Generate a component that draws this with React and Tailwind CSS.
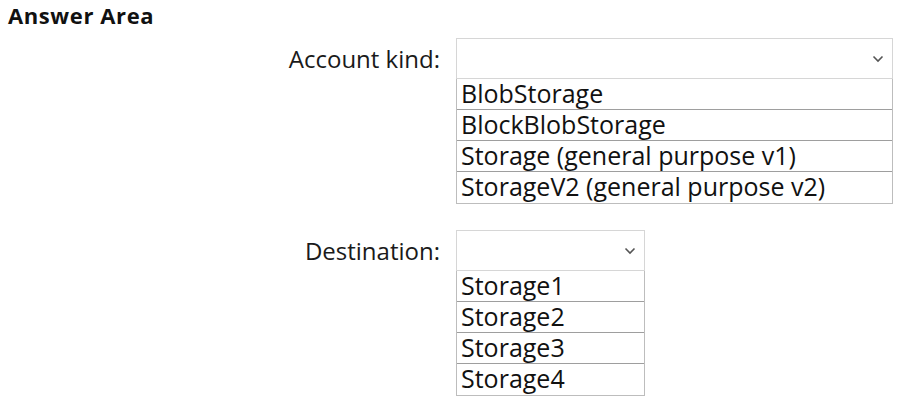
import React from 'react';

const Chevron = () => (
  <svg width="12" height="8" viewBox="0 0 12 8" className="text-[#555]">
    <path d="M1.5 1.5 L6 6 L10.5 1.5" fill="none" stroke="currentColor" strokeWidth="1.6" />
  </svg>
);

const DropDown = ({ label, options, width }) => (
  <div className="flex items-start">
    <div className="w-[440px] h-[41px] flex items-center justify-end text-[24px] leading-none text-[#1a1a1a]">
      {label}
    </div>
    <div className="ml-[16px]" style={{ width }}>
      <div className="h-[41px] border border-[#d6d6d6] flex items-center justify-end pr-[8px]">
        <Chevron />
      </div>
      <div className="border border-t-0 border-[#bdbdbd]">
        {options.map((opt, i) => (
          <div
            key={opt}
            className={
              'h-[31px] pl-[4px] text-[25px] leading-[29px] text-[#111] whitespace-nowrap ' +
              (i < options.length - 1 ? 'border-b border-[#9e9e9e]' : '')
            }
          >
            {opt}
          </div>
        ))}
      </div>
    </div>
  </div>
);

export default function App() {
  return (
    <div className="w-[899px] h-[401px] bg-white font-['Open_Sans',sans-serif] overflow-hidden">
      <h1 className="pl-[8px] pt-[1px] text-[22px] font-bold tracking-[0.6px] text-[#111] leading-[28px]">Answer Area</h1>
      <div className="mt-[9px]">
        <DropDown
          label="Account kind:"
          width={437}
          options={['BlobStorage', 'BlockBlobStorage', 'Storage (general purpose v1)', 'StorageV2 (general purpose v2)']}
        />
      </div>
      <div className="mt-[26px]">
        <DropDown label="Destination:" width={189} options={['Storage1', 'Storage2', 'Storage3', 'Storage4']} />
      </div>
    </div>
  );
}
